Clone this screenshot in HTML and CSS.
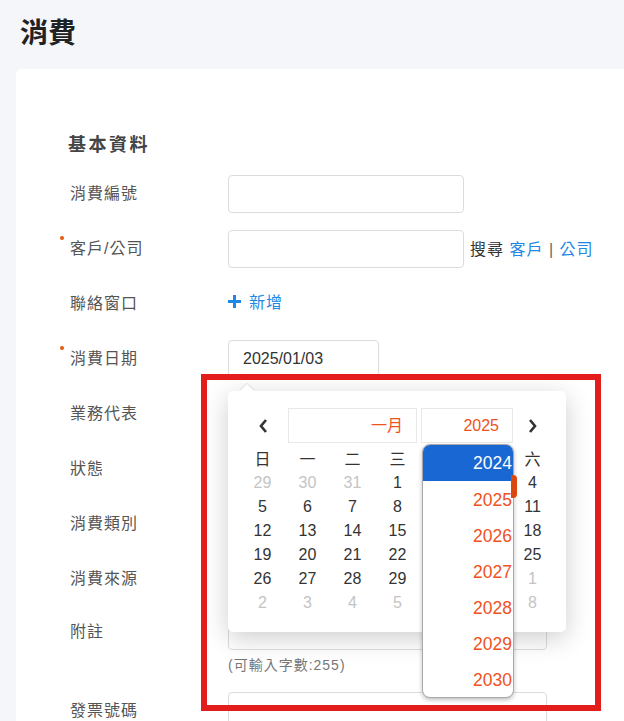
FILE: index.html
```html
<!DOCTYPE html>
<html>
<head>
  <title>消費</title>
  <meta name="viewport" content="width=device-width, initial-scale=1.0">
  <link rel="stylesheet" href="styles.css">
</head>
<body>
  <h1 class="page-title">消費</h1>

  <div class="card">
    <h2 class="section-title">基本資料</h2>

    <div class="form-row">
      <label class="form-label">消費編號</label>
      <input class="form-input" type="text">
    </div>

    <div class="form-row">
      <label class="form-label required">客戶/公司</label>
      <input class="form-input" type="text">
      <span class="search-links">搜尋 <a class="link">客戶</a> <span class="sep">|</span> <a class="link">公司</a></span>
    </div>

    <div class="form-row">
      <label class="form-label">聯絡窗口</label>
      <a class="add-link">
        <svg width="13" height="13" viewBox="0 0 13 13"><path d="M6.5 0v13M0 6.5h13" stroke="#1e88e5" stroke-width="3"/></svg>
        新增
      </a>
    </div>

    <div class="form-row">
      <label class="form-label required">消費日期</label>
      <div class="date-wrap">
        <input class="form-input date-input" type="text" value="2025/01/03">

        <!-- datepicker popup -->
        <div class="datepicker">
          <div class="dp-header">
            <span class="dp-prev">
              <svg width="10" height="16" viewBox="0 0 10 16"><path d="M8 2L3 8l5 6" fill="none" stroke="#333" stroke-width="2.6"/></svg>
            </span>
            <span class="dp-box dp-month">一月</span>
            <span class="dp-box dp-year">2025</span>
            <span class="dp-next">
              <svg width="10" height="16" viewBox="0 0 10 16"><path d="M2 2l5 6-5 6" fill="none" stroke="#333" stroke-width="2.6"/></svg>
            </span>
          </div>
          <div class="dp-grid">
            <span class="dp-dow">日</span><span class="dp-dow">一</span><span class="dp-dow">二</span><span class="dp-dow">三</span><span class="dp-dow">四</span><span class="dp-dow">五</span><span class="dp-dow">六</span>
            <span class="muted">29</span><span class="muted">30</span><span class="muted">31</span><span>1</span><span>2</span><span>3</span><span>4</span>
            <span>5</span><span>6</span><span>7</span><span>8</span><span>9</span><span>10</span><span>11</span>
            <span>12</span><span>13</span><span>14</span><span>15</span><span>16</span><span>17</span><span>18</span>
            <span>19</span><span>20</span><span>21</span><span>22</span><span>23</span><span>24</span><span>25</span>
            <span>26</span><span>27</span><span>28</span><span>29</span><span>30</span><span>31</span><span class="muted">1</span>
            <span class="muted">2</span><span class="muted">3</span><span class="muted">4</span><span class="muted">5</span><span class="muted">6</span><span class="muted">7</span><span class="muted">8</span>
          </div>

          <ul class="year-list">
            <li class="active">2024</li>
            <li>2025</li>
            <li>2026</li>
            <li>2027</li>
            <li>2028</li>
            <li>2029</li>
            <li>2030</li>
          </ul>
          <span class="year-scroll"></span>
        </div>
      </div>
    </div>

    <div class="form-row">
      <label class="form-label">業務代表</label>
      <input class="form-input" type="text">
    </div>

    <div class="form-row">
      <label class="form-label">狀態</label>
      <input class="form-input" type="text">
    </div>

    <div class="form-row">
      <label class="form-label">消費類別</label>
      <input class="form-input" type="text">
    </div>

    <div class="form-row">
      <label class="form-label">消費來源</label>
      <input class="form-input" type="text">
    </div>

    <div class="form-row top">
      <label class="form-label">附註</label>
      <textarea class="form-textarea"></textarea>
    </div>
    <p class="hint">(可輸入字數:255)</p>

    <div class="form-row">
      <label class="form-label">發票號碼</label>
      <input class="form-input wide" type="text">
    </div>
  </div>

  <div class="highlight-box"></div>
</body>
</html>
```

FILE: styles.css
```css
body {
  margin: 0;
  position: relative;
  background-color: #f5f6fa;
  font-family: "Liberation Sans", "Noto Sans CJK TC", sans-serif;
  color: #333;
  height: 721px;
  overflow: hidden;
}

.page-title {
  margin: 0;
  padding: 19px 20px 20px;
  font-size: 28px;
  line-height: 30px;
  font-weight: 700;
  color: #222;
}

.card {
  background-color: #fff;
  margin-left: 16px;
  border-top-left-radius: 6px;
  padding: 64px 0 0 52px;
  min-height: 700px;
}

.section-title {
  margin: 0 0 18px;
  font-size: 18px;
  line-height: 24px;
  letter-spacing: 2.5px;
  font-weight: 600;
  color: #444;
}

.form-row {
  display: flex;
  align-items: center;
  min-height: 38px;
  margin-bottom: 17px;
}

.form-row.top {
  align-items: flex-start;
  margin-bottom: 0;
}

.form-label {
  position: relative;
  width: 158px;
  margin-left: 2px;
  padding-bottom: 5px;
  font-size: 16px;
  letter-spacing: 1px;
  color: #555;
}

.form-row.top .form-label {
  padding-top: 3px;
}

.form-label.required::before {
  content: "";
  position: absolute;
  left: -10px;
  top: 1px;
  width: 4px;
  height: 4px;
  border-radius: 50%;
  background-color: #e8590c;
}

.form-input {
  box-sizing: border-box;
  width: 236px;
  height: 38px;
  border: 1px solid #dcdcdc;
  border-radius: 4px;
  padding: 0 14px;
  font-family: inherit;
  font-size: 16px;
  color: #333;
  outline: none;
}

.form-input.wide {
  width: 319px;
}

.form-textarea {
  box-sizing: border-box;
  width: 319px;
  height: 35px;
  border: 1px solid #dcdcdc;
  border-radius: 4px;
  resize: none;
}

.hint {
  margin: 4px 0 19px 160px;
  font-size: 14px;
  line-height: 16px;
  letter-spacing: 1px;
  color: #777;
}

.search-links {
  margin-left: 6px;
  font-size: 16px;
  letter-spacing: 1px;
  color: #333;
  padding-bottom: 2px;
}

.link {
  color: #1e88e5;
}

.sep {
  color: #666;
}

.add-link {
  display: inline-flex;
  align-items: center;
  gap: 8px;
  color: #1e88e5;
  font-size: 16px;
  letter-spacing: 1px;
  padding-bottom: 6px;
}

/* datepicker */
.date-wrap {
  position: relative;
}

.date-input {
  width: 151px;
}

.datepicker {
  position: absolute;
  left: 0;
  top: 51px;
  width: 338px;
  height: 241px;
  box-sizing: border-box;
  padding-top: 17px;
  background-color: #fff;
  border-radius: 5px;
  box-shadow: 0 6px 26px rgba(0, 0, 0, 0.2);
  z-index: 5;
}

.datepicker::before {
  content: "";
  position: absolute;
  left: 14px;
  top: -5px;
  width: 10px;
  height: 10px;
  background-color: #fff;
  transform: rotate(45deg);
  box-shadow: -1px -1px 1px rgba(0, 0, 0, 0.08);
}

.dp-header {
  display: flex;
  align-items: center;
  gap: 4px;
}

.dp-prev,
.dp-next {
  display: flex;
  justify-content: center;
  align-items: center;
  box-sizing: border-box;
  height: 35px;
}

.dp-prev {
  width: 60px;
  padding-left: 10px;
  margin-right: -4px;
}

.dp-next {
  width: 40px;
  margin-left: -4px;
}

.dp-box {
  box-sizing: border-box;
  height: 35px;
  line-height: 33px;
  border: 1px solid #e8e8e8;
  text-align: right;
  color: #f0521c;
  font-size: 16px;
}

.dp-month {
  width: 129px;
  padding-right: 13px;
}

.dp-year {
  width: 92px;
  padding-right: 13px;
}

.dp-grid {
  display: grid;
  grid-template-columns: repeat(7, 45px);
  grid-auto-rows: 24px;
  margin: 4px 0 0 12px;
  font-size: 16px;
  text-align: center;
  line-height: 24px;
}

.dp-dow {
  line-height: 26px;
  height: 26px;
  color: #333;
}

.dp-grid .muted {
  color: #c4c4c4;
}

.year-list {
  position: absolute;
  left: 194px;
  top: 53px;
  width: 90px;
  margin: 0;
  padding: 0;
  list-style: none;
  background-color: #fff;
  border: 1px solid #a8a8a8;
  border-radius: 8px;
  box-shadow: 0 2px 4px rgba(0, 0, 0, 0.25);
  overflow: hidden;
}

.year-list li {
  height: 36px;
  line-height: 38px;
  text-align: right;
  padding-right: 1px;
  font-size: 17.5px;
  color: #f0521c;
}

.year-list li.active {
  background-color: #1967d2;
  color: #fff;
  line-height: 36px;
}

.year-scroll {
  position: absolute;
  left: 283px;
  top: 84px;
  width: 6px;
  height: 23px;
  background-color: #d9480f;
  border-radius: 0 4px 4px 0;
}

/* annotation frame */
.highlight-box {
  position: absolute;
  left: 201px;
  top: 374px;
  width: 400px;
  height: 337px;
  box-sizing: border-box;
  border: 6px solid #e31c1c;
  z-index: 10;
}
```
